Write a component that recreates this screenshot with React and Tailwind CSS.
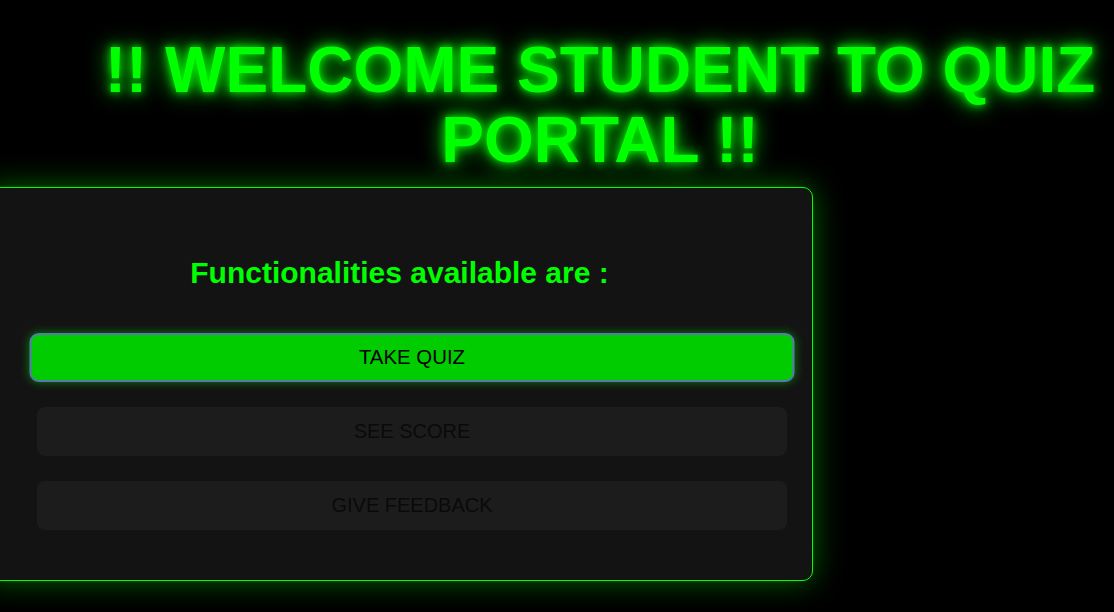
export default function App() {
  const buttons = ["SEE SCORE", "GIVE FEEDBACK"];

  return (
    <div className="min-h-[612px] w-full overflow-hidden bg-black font-['Liberation_Sans',Arial,sans-serif]">
      <h1 className="pt-[35px] pl-[86px] text-center text-[64px] leading-[70px] font-bold text-[#00ff00] [text-shadow:0_0_10px_#00ff00,0_0_22px_#00ff00]">
        !! WELCOME STUDENT TO QUIZ PORTAL !!
      </h1>

      <div className="mt-[12px] -ml-[14px] w-[827px] h-[394px] rounded-[10px] border border-[#00ff00] bg-[#131313] shadow-[0_0_30px_rgba(0,255,0,0.4)]">
        <h2 className="mt-[68px] text-center text-[30px] leading-[34px] font-bold text-[#00ff00]">
          Functionalities available are :
        </h2>

        <div className="mt-[43px] pl-[50px] pr-[25px] flex flex-col gap-[25px]">
          <button className="h-[49px] w-full scale-x-[1.02] rounded-[9px] border-2 border-[#5a78b0] bg-[#00cc00] pb-[2px] text-[20px] text-black shadow-[0_0_10px_rgba(0,255,0,0.45)]">
            TAKE QUIZ
          </button>
          {buttons.map((label) => (
            <button
              key={label}
              className="h-[49px] w-full rounded-[8px] bg-[#1c1c1c] pb-[2px] text-[20px] text-[#0a0a0a]"
            >
              {label}
            </button>
          ))}
        </div>
      </div>
    </div>
  );
}
